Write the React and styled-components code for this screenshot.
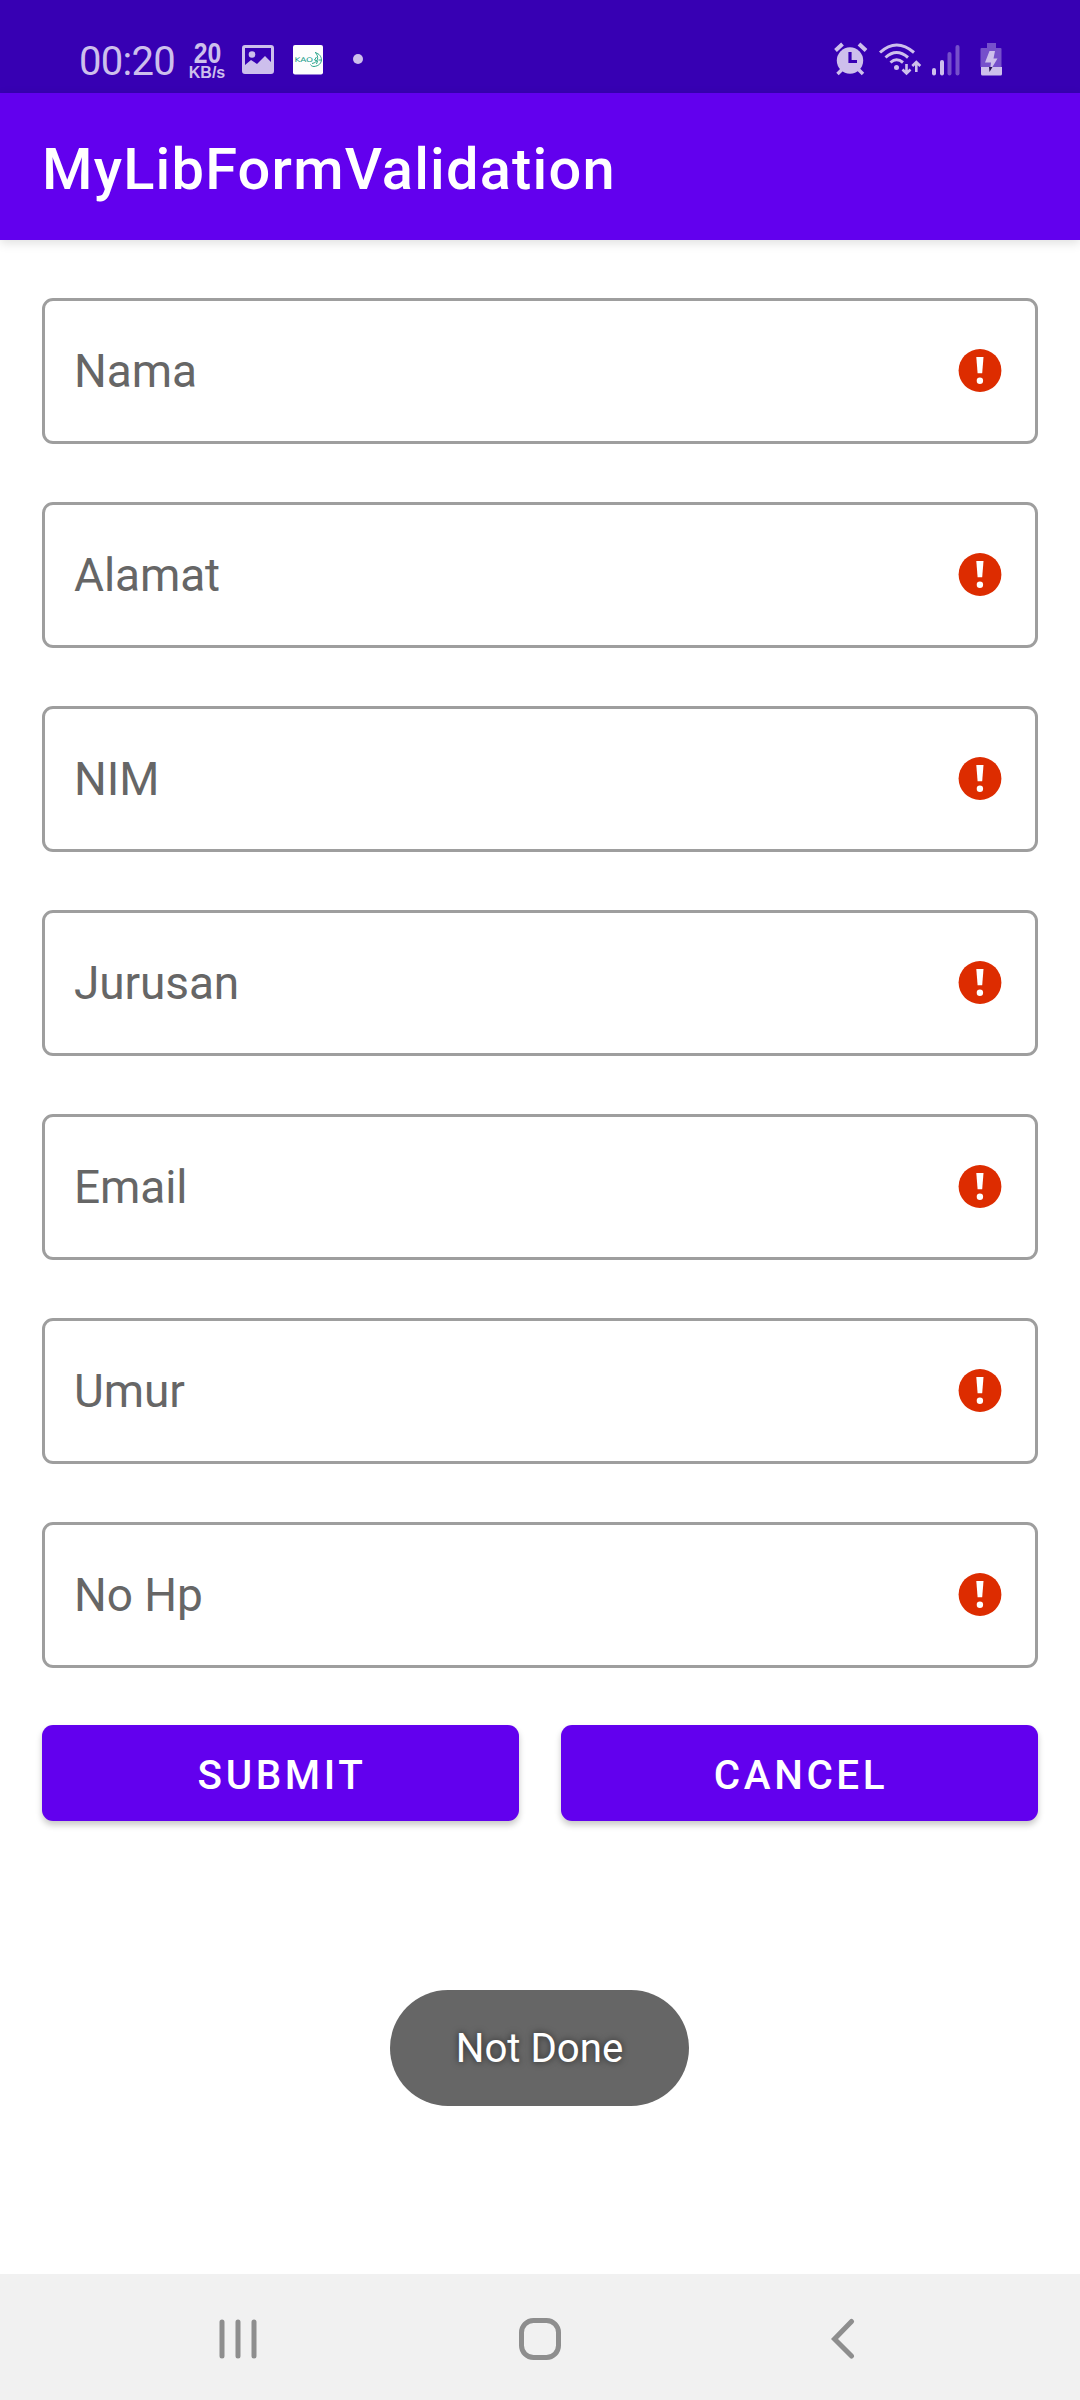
import React from 'react';
import styled, { createGlobalStyle } from 'styled-components';

const Global = createGlobalStyle`
  * { box-sizing: border-box; }
  body { margin: 0; background: #fff; font-family: Roboto, "Liberation Sans", sans-serif; }
`;

const Screen = styled.div`
  width: 1080px;
  height: 2400px;
  display: flex;
  flex-direction: column;
  background: #fff;
  overflow: hidden;
`;

const StatusBar = styled.div`
  height: 93px;
  flex: none;
  display: flex;
  justify-content: space-between;
  align-items: flex-start;
  padding: 40px 76px 0 79px;
  background: #3700b3;
  color: #cdbfec;
`;

const StatusGroup = styled.div`
  display: flex;
  align-items: flex-start;
`;

const Clock = styled.span`
  font-size: 40px;
  line-height: 43px;
  letter-spacing: -0.7px;
  width: 97px;
  white-space: nowrap;
`;

const Speed = styled.div`
  display: flex;
  flex-direction: column;
  align-items: center;
  width: 38px;
  margin: 0 16px 0 12px;
  font-weight: 700;
  white-space: nowrap;
`;

const SpeedValue = styled.span`
  font-family: "Liberation Sans", Arial, sans-serif;
  font-size: 29.5px;
  line-height: 25px;
  transform: scaleX(0.84);
`;

const SpeedUnit = styled.span`
  font-family: "Liberation Sans", Arial, sans-serif;
  font-size: 16px;
  line-height: 15px;
`;

const Icon = styled.svg`
  display: block;
  flex: none;
  margin-top: ${(p) => p.$top || 0}px;
  margin-left: ${(p) => p.$gap || 0}px;
`;

const AppBar = styled.header`
  height: 147px;
  flex: none;
  display: flex;
  align-items: center;
  padding: 5px 42px 0;
  background: #6200ee;
  box-shadow: 0 3px 10px rgba(0, 0, 0, 0.13);
`;

const Title = styled.h1`
  margin: 0;
  color: #fff;
  font-size: 57.75px;
  font-weight: 500;
  letter-spacing: 1.2px;
  white-space: nowrap;
`;

const Form = styled.main`
  flex: 1;
  display: flex;
  flex-direction: column;
  gap: 58px;
  padding: 58px 42px 0;
`;

const Field = styled.div`
  height: 146px;
  display: flex;
  align-items: center;
  justify-content: space-between;
  padding: 0 33px 0 29px;
  border: 3px solid #9e9e9e;
  border-radius: 11px;
`;

const Label = styled.label`
  color: #666;
  font-size: 46px;
  line-height: 54px;
  letter-spacing: -0.1px;
`;

const Actions = styled.div`
  display: flex;
  gap: 42px;
  margin-top: -1px;
`;

const Button = styled.button`
  flex: 1;
  height: 96px;
  padding: 4px 0 0 3px;
  border: 0;
  border-radius: 11px;
  background: #6200ee;
  color: #fff;
  font: 500 40.4px Roboto, "Liberation Sans", sans-serif;
  letter-spacing: 3.6px;
  box-shadow: 0 4px 6px rgba(0, 0, 0, 0.22);
`;

const Toast = styled.div`
  align-self: center;
  display: flex;
  align-items: center;
  justify-content: center;
  width: 299px;
  height: 116px;
  margin: 111px 1px 0 0;
  border-radius: 58px;
  background: #666;
  color: #fff;
  font-size: 40.2px;
  text-shadow: 0 0 7px rgba(0, 0, 0, 0.6);
`;

const NavBar = styled.nav`
  height: 126px;
  flex: none;
  display: grid;
  grid-template-columns: 300px 312px auto;
  align-content: start;
  padding: 44px 0 0 219px;
  background: #f1f1f1;
`;

const ErrorIcon = () => (
  <Icon width="44" height="44" viewBox="0 0 44 44">
    <circle cx="22" cy="21.5" r="21.4" fill="#dd2c00" />
    <path d="M18.3 8h7.2l-1.3 16.300h-4.6z" fill="#fff" />
    <circle cx="21.9" cy="31.7" r="3.2" fill="#fff" />
  </Icon>
);

const PictureIcon = () => (
  <Icon $top={5} width="32" height="30" viewBox="0 0 32 30">
    <path fillRule="evenodd" fill="currentColor" d="M3 0h26a3 3 0 0 1 3 3v23a3 3 0 0 1-3 3H3a3 3 0 0 1-3-3V3a3 3 0 0 1 3-3zM3 3v17l6-5 6 4 8-8 6 6V3z" />
    <circle cx="10" cy="9.5" r="3.3" fill="currentColor" />
  </Icon>
);

const KaojiIcon = () => (
  <Icon $gap={19} $top={5} width="30" height="30" viewBox="0 0 30 30">
    <rect width="30" height="29.5" rx="2" fill="#fdfdfd" />
    <text x="1.5" y="17" fontFamily="DejaVu Sans, sans-serif" fontSize="6.4" textLength="18.5" lengthAdjust="spacingAndGlyphs" fill="#159c8a">KAO</text>
    <path d="M22 7.500c8.500 2 9 13-1 14-2 0-3-1-3.500-2M22.500 7.500c3.500 4 3 10-3.500 11M23.500 12l-2 3 3 1-1 3M25.500 15h3" fill="none" stroke="#2aa58b" strokeWidth="1" />
  </Icon>
);

const DotIcon = () => (
  <Icon $gap={30} $top={14} width="10" height="10" viewBox="0 0 10 10">
    <circle cx="5" cy="5" r="5" fill="currentColor" />
  </Icon>
);

const SystemIcons = () => (
  <Icon width="170" height="37" viewBox="0 0 170 37" fill="none">
    <g stroke="currentColor" strokeLinecap="butt">
      <circle cx="16" cy="20.5" r="13.2" fill="currentColor" stroke="none" />
      <path d="M1.5 10.5l7-6.5M32 10.500L25 4" strokeWidth="4" />
      <path d="M3.500 34l5.500-5.500M29 34l-5.500-5.500" strokeWidth="3.500" />
      <path d="M16 12v9.500h7" stroke="#3700b3" strokeWidth="3.200" />
      <path d="M46 12.500q16.500-15 34 0M51.500 17.500q11-10 22.500 0M56.500 22.500q6-5.500 12.500 0" strokeWidth="3" />
      <circle cx="62.500" cy="27.500" r="2.500" fill="currentColor" stroke="none" />
      <path d="M72.500 24v9M68.500 29.500l4 4 4-4M82.300 32v-9.500M78.300 26l4-4 4 4" strokeWidth="2.600" />
    </g>
    <g fill="currentColor">
      <rect x="98" y="28" width="4" height="7.500" rx="2" />
      <rect x="106" y="20" width="4" height="15.500" rx="2" />
      <rect x="113.500" y="12" width="4" height="23.500" rx="2" opacity=".42" />
      <rect x="121.500" y="5" width="4" height="30.500" rx="2" opacity=".42" />
      <path d="M153 3h9v5h4.500q1 0 1 1V27h-21V9q0-1 1-1H153z" opacity=".42" />
      <path d="M147 27h21v7q0 1.500-1.500 1.500h-18q-1.500 0-1.500-1.500z" />
      <path d="M155.500 11h5.500l-1.500 7.500h4L156 31l1-8.500h-6z" />
      <path d="M155 27h3.500l-3 5z" fill="#241052" />
    </g>
  </Icon>
);

const RecentsIcon = () => (
  <Icon width="39" height="42" viewBox="0 0 39 42" stroke="#8e8e8e" strokeWidth="5" strokeLinecap="round">
    <path d="M3 4v34M19 4v34M35 4v34" />
  </Icon>
);

const HomeIcon = () => (
  <Icon width="42" height="42" viewBox="0 0 42 42">
    <rect x="2.500" y="2.500" width="37" height="37" rx="12" fill="none" stroke="#8e8e8e" strokeWidth="5" />
  </Icon>
);

const BackIcon = () => (
  <Icon width="24" height="42" viewBox="0 0 24 42">
    <path d="M20.500 3.500L3.500 21l17 17" fill="none" stroke="#8e8e8e" strokeWidth="5" strokeLinecap="round" />
  </Icon>
);

const fields = ['Nama', 'Alamat', 'NIM', 'Jurusan', 'Email', 'Umur', 'No Hp'];

export default function App() {
  return (
    <Screen>
      <Global />
      <StatusBar>
        <StatusGroup>
          <Clock>00:20</Clock>
          <Speed>
            <SpeedValue>20</SpeedValue>
            <SpeedUnit>KB/s</SpeedUnit>
          </Speed>
          <PictureIcon />
          <KaojiIcon />
          <DotIcon />
        </StatusGroup>
        <SystemIcons />
      </StatusBar>
      <AppBar>
        <Title>MyLibFormValidation</Title>
      </AppBar>
      <Form>
        {fields.map((name) => (
          <Field key={name}>
            <Label>{name}</Label>
            <ErrorIcon />
          </Field>
        ))}
        <Actions>
          <Button>SUBMIT</Button>
          <Button>CANCEL</Button>
        </Actions>
        <Toast>Not Done</Toast>
      </Form>
      <NavBar>
        <RecentsIcon />
        <HomeIcon />
        <BackIcon />
      </NavBar>
    </Screen>
  );
}
